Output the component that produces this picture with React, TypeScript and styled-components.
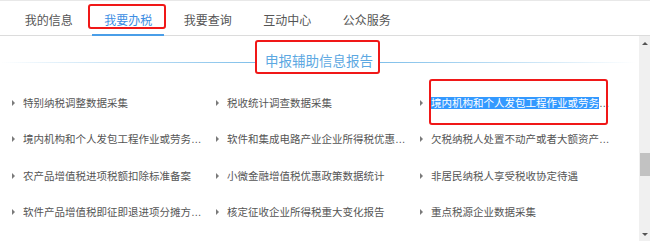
import React from "react"
import styled, { createGlobalStyle, css } from "styled-components"

const GlobalStyle = createGlobalStyle`
  html, body {
    margin: 0;
    padding: 0;
    width: 650px;
    height: 241px;
    overflow: hidden;
    background: #fff;
  }
  body {
    font-family: "Liberation Sans", "Noto Sans CJK SC", sans-serif;
  }
`

// red annotation frame drawn over a part of the page
const markFrame = (top: number, right: number, bottom: number, left: number) => css`
  &::before {
    content: "";
    position: absolute;
    top: ${top}px;
    right: ${right}px;
    bottom: ${bottom}px;
    left: ${left}px;
    border: 2px solid #f01818;
    border-radius: 3px;
    pointer-events: none;
  }
`

const Page = styled.div`
  width: 650px;
  height: 241px;
  display: flex;
  flex-direction: column;
`

const TabBar = styled.nav`
  height: 36px;
  box-sizing: border-box;
  display: flex;
  padding-left: 9px;
  border-top: 1px solid #e8e8e8;
  border-bottom: 1px solid #dcdcdc;
`

const Tab = styled.div<{ $active?: boolean; $marked?: boolean }>`
  position: relative;
  display: flex;
  align-items: center;
  padding: 2px 15.75px 0;
  font-size: 12px;
  color: ${(p) => (p.$active ? "#3d8ee3" : "#555")};
  cursor: pointer;

  ${(p) =>
    p.$active &&
    css`
      &::after {
        content: "";
        position: absolute;
        left: 3px;
        right: 4px;
        bottom: -1px;
        height: 2px;
        background: #4a9ee8;
      }
    `}

  ${(p) => p.$marked && markFrame(3, 2, 6, -1)}
`

const Body = styled.div`
  flex: 1;
  display: flex;
  min-height: 0;
`

const Main = styled.main`
  flex: 1;
  min-width: 0;
`

const HeadingRow = styled.div`
  height: 49px;
  box-sizing: border-box;
  padding-top: 3px;
  display: flex;
  align-items: center;
`

const Rule = styled.div<{ $side: "left" | "right" }>`
  flex: 1;
  height: 1px;
  margin-right: ${(p) => (p.$side === "right" ? "3px" : "0")};
  background: linear-gradient(
    ${(p) => (p.$side === "left" ? "to right" : "to left")},
    rgba(255, 255, 255, 0),
    #7fbfea
  );
`

const Title = styled.h2`
  position: relative;
  margin: 0;
  padding: 0 7px 0 9px;
  font-size: 13.5px;
  line-height: 18px;
  font-weight: normal;
  color: #5ca8e2;
  ${markFrame(-13, 0, -3, -1)}
`

const Grid = styled.ul`
  list-style: none;
  margin: 0;
  padding: 0 0 0 8px;
  display: grid;
  grid-template-columns: repeat(3, 204px);
  grid-auto-rows: 36.3px;
`

const Item = styled.li<{ $marked?: boolean }>`
  position: relative;
  display: flex;
  align-items: center;
  padding-left: 4px;
  ${(p) => p.$marked && markFrame(-6, 12, -4, 13)}
`

const Arrow = styled.span`
  width: 0;
  height: 0;
  margin-right: 8px;
  border-left: 3px solid #7a7a7a;
  border-top: 3px solid transparent;
  border-bottom: 3px solid transparent;
`

const Label = styled.span`
  width: 180px;
  font-size: 10.5px;
  line-height: 14px;
  color: #555;
  white-space: nowrap;
  overflow: hidden;
  text-overflow: ellipsis;
`

const Selected = styled.span`
  background: #3399ff;
  color: #fff;
`

const Scrollbar = styled.div`
  width: 11px;
  background: #f0f0f0;
  display: flex;
  flex-direction: column;
  align-items: center;
`

const ScrollArrow = styled.span<{ $dir: "up" | "down" }>`
  width: 0;
  height: 0;
  margin: ${(p) => (p.$dir === "up" ? "6px 0 0" : "0 0 5px")};
  border-left: 3px solid transparent;
  border-right: 3px solid transparent;
  ${(p) =>
    p.$dir === "up"
      ? "border-bottom: 3px solid #555;"
      : "border-top: 3px solid #555;"}
`

const Track = styled.div`
  flex: 1;
  width: 100%;
  display: flex;
  flex-direction: column;
`

const Thumb = styled.div`
  margin-top: 108px;
  margin-left: 1px;
  height: 23px;
  background: #c2c2c2;
`

const tabs = ["我的信息", "我要办税", "我要查询", "互动中心", "公众服务"]

const items = [
  "特别纳税调整数据采集",
  "税收统计调查数据采集",
  "境内机构和个人发包工程作业或劳务项目报告",
  "境内机构和个人发包工程作业或劳务项目备案",
  "软件和集成电路产业企业所得税优惠信息采集",
  "欠税纳税人处置不动产或者大额资产报告",
  "农产品增值税进项税额扣除标准备案",
  "小微金融增值税优惠政策数据统计",
  "非居民纳税人享受税收协定待遇",
  "软件产品增值税即征即退进项分摊方式备案",
  "核定征收企业所得税重大变化报告",
  "重点税源企业数据采集",
]

// the visible part of the third entry is shown as selected text
const selectedIndex = 2
const selectedChars = 16

const App = () => {
  return (
    <>
      <GlobalStyle />
      <Page>
        <TabBar>
          {tabs.map((t, i) => (
            <Tab key={t} $active={i === 1} $marked={i === 1}>
              {t}
            </Tab>
          ))}
        </TabBar>
        <Body>
          <Main>
            <HeadingRow>
              <Rule $side="left" />
              <Title>申报辅助信息报告</Title>
              <Rule $side="right" />
            </HeadingRow>
            <Grid>
              {items.map((text, i) => (
                <Item key={i} $marked={i === selectedIndex} title={text}>
                  <Arrow />
                  <Label>
                    {i === selectedIndex ? (
                      <>
                        <Selected>{text.slice(0, selectedChars)}</Selected>
                        {text.slice(selectedChars)}
                      </>
                    ) : (
                      text
                    )}
                  </Label>
                </Item>
              ))}
            </Grid>
          </Main>
          <Scrollbar>
            <ScrollArrow $dir="up" />
            <Track>
              <Thumb />
            </Track>
            <ScrollArrow $dir="down" />
          </Scrollbar>
        </Body>
      </Page>
    </>
  )
}

export default App
